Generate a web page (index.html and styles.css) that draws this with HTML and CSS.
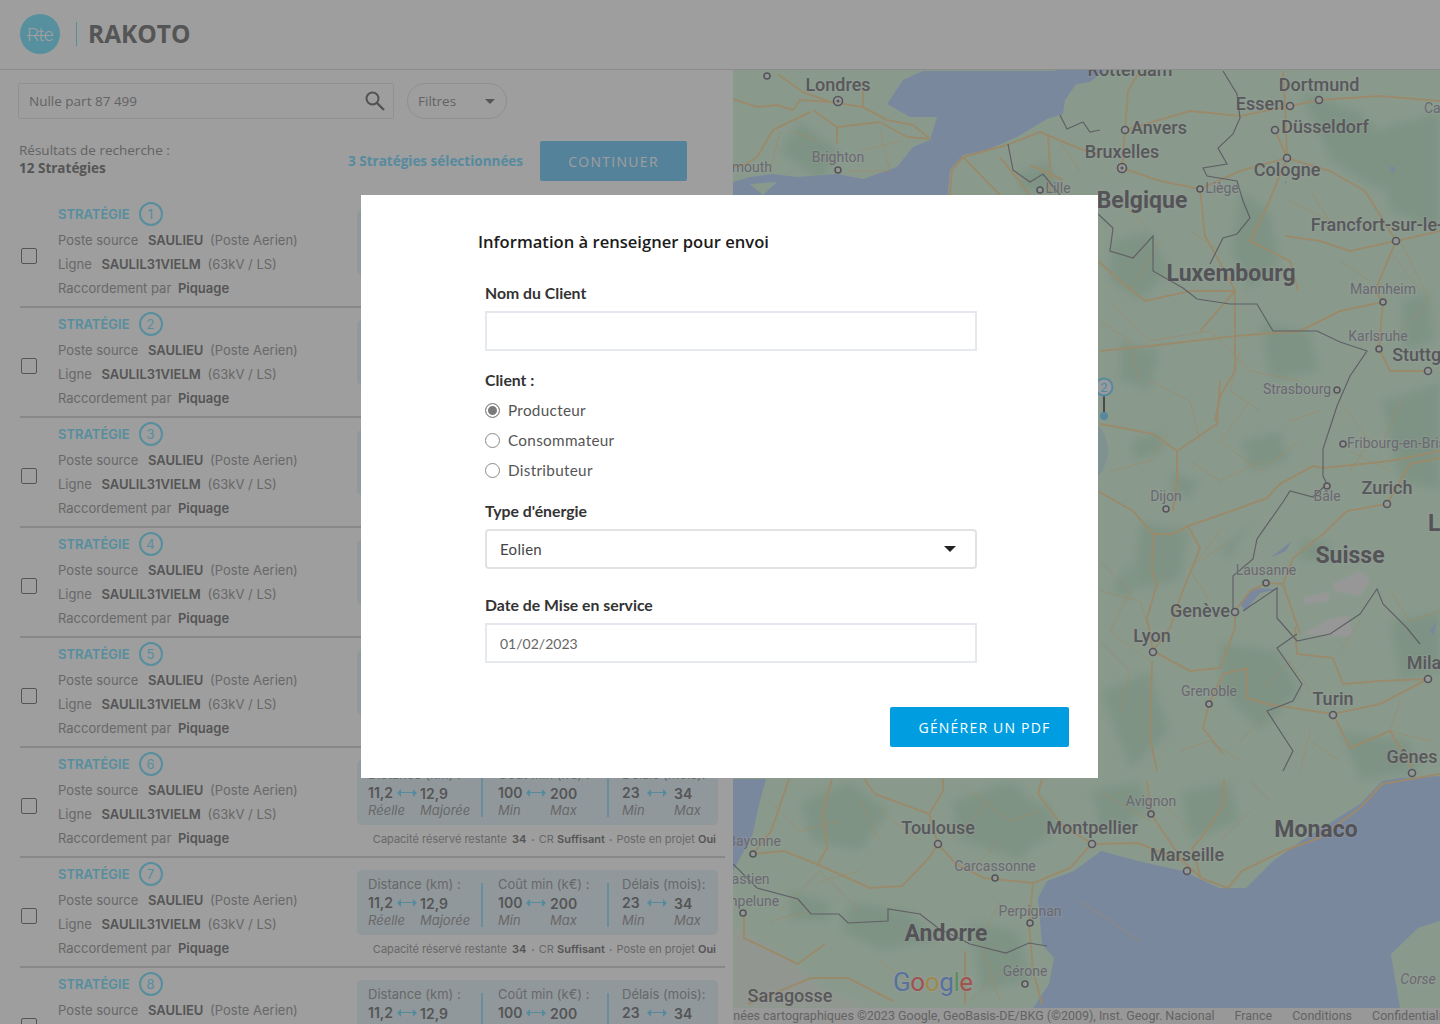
FILE: index.html
```html
<!DOCTYPE html>
<html lang="fr">
<head>
<meta charset="utf-8">
<title>Rakoto</title>
<link rel="stylesheet" href="styles.css">
</head>
<body>
<header class="topbar">
	<div class="logo"><span>Rte</span></div>
	<h1 class="appname">RAKOTO</h1>
</header>
<div class="layout">
	<section class="panel">
		<div class="searchbar">
			<div class="search">
				<input type="text" value="Nulle part 87 499">
				<svg width="22" height="22" viewBox="0 0 22 22"><circle cx="8.5" cy="8.5" r="6" fill="none" stroke="#858585" stroke-width="2"/><path d="M13 13l7 7" stroke="#858585" stroke-width="2.4"/></svg>
			</div>
			<button type="button" class="filter">Filtres<i class="caret"></i></button>
		</div>
		<div class="results">
			<p class="count">Résultats de recherche :<br><b>12 Stratégies</b></p>
			<span class="selected">3 Stratégies sélectionnées</span>
			<button type="button" class="continue">CONTINUER</button>
		</div>
		<div class="list">
			<article class="row">
				<i class="check"></i>
				<div class="info">
					<div class="title">STRATÉGIE <span class="num">1</span></div>
					<p>Poste source <b class="first">SAULIEU</b> (Poste Aerien)</p>
					<p>Ligne <b class="first">SAULIL31VIELM</b> (63kV / LS)</p>
					<p>Raccordement par <b class="first">Piquage</b></p>
				</div>
				<div class="side">
					<div class="card">
						<div class="metric m1"><span class="lbl">Distance (km) :</span><div class="vals"><span class="val"><b>11,2</b><i class="arrow"></i></span><b>12,9</b><em>Réelle</em><em>Majorée</em></div></div>
						<i class="sep"></i>
						<div class="metric m2"><span class="lbl">Coût min (k€) :</span><div class="vals"><span class="val"><b>100</b><i class="arrow"></i></span><b>200</b><em>Min</em><em>Max</em></div></div>
						<i class="sep"></i>
						<div class="metric m3"><span class="lbl">Délais (mois):</span><div class="vals"><span class="val"><b>23</b><i class="arrow"></i></span><b>34</b><em>Min</em><em>Max</em></div></div>
					</div>
					<p class="extra">Capacité réservé restante <b class="cap">34</b> <span class="dotsep">•</span> CR <b>Suffisant</b> <span class="dotsep">•</span> Poste en projet <b>Oui</b></p>
				</div>
			</article>
			<article class="row">
				<i class="check"></i>
				<div class="info">
					<div class="title">STRATÉGIE <span class="num">2</span></div>
					<p>Poste source <b class="first">SAULIEU</b> (Poste Aerien)</p>
					<p>Ligne <b class="first">SAULIL31VIELM</b> (63kV / LS)</p>
					<p>Raccordement par <b class="first">Piquage</b></p>
				</div>
				<div class="side">
					<div class="card">
						<div class="metric m1"><span class="lbl">Distance (km) :</span><div class="vals"><span class="val"><b>11,2</b><i class="arrow"></i></span><b>12,9</b><em>Réelle</em><em>Majorée</em></div></div>
						<i class="sep"></i>
						<div class="metric m2"><span class="lbl">Coût min (k€) :</span><div class="vals"><span class="val"><b>100</b><i class="arrow"></i></span><b>200</b><em>Min</em><em>Max</em></div></div>
						<i class="sep"></i>
						<div class="metric m3"><span class="lbl">Délais (mois):</span><div class="vals"><span class="val"><b>23</b><i class="arrow"></i></span><b>34</b><em>Min</em><em>Max</em></div></div>
					</div>
					<p class="extra">Capacité réservé restante <b class="cap">34</b> <span class="dotsep">•</span> CR <b>Suffisant</b> <span class="dotsep">•</span> Poste en projet <b>Oui</b></p>
				</div>
			</article>
			<article class="row">
				<i class="check"></i>
				<div class="info">
					<div class="title">STRATÉGIE <span class="num">3</span></div>
					<p>Poste source <b class="first">SAULIEU</b> (Poste Aerien)</p>
					<p>Ligne <b class="first">SAULIL31VIELM</b> (63kV / LS)</p>
					<p>Raccordement par <b class="first">Piquage</b></p>
				</div>
				<div class="side">
					<div class="card">
						<div class="metric m1"><span class="lbl">Distance (km) :</span><div class="vals"><span class="val"><b>11,2</b><i class="arrow"></i></span><b>12,9</b><em>Réelle</em><em>Majorée</em></div></div>
						<i class="sep"></i>
						<div class="metric m2"><span class="lbl">Coût min (k€) :</span><div class="vals"><span class="val"><b>100</b><i class="arrow"></i></span><b>200</b><em>Min</em><em>Max</em></div></div>
						<i class="sep"></i>
						<div class="metric m3"><span class="lbl">Délais (mois):</span><div class="vals"><span class="val"><b>23</b><i class="arrow"></i></span><b>34</b><em>Min</em><em>Max</em></div></div>
					</div>
					<p class="extra">Capacité réservé restante <b class="cap">34</b> <span class="dotsep">•</span> CR <b>Suffisant</b> <span class="dotsep">•</span> Poste en projet <b>Oui</b></p>
				</div>
			</article>
			<article class="row">
				<i class="check"></i>
				<div class="info">
					<div class="title">STRATÉGIE <span class="num">4</span></div>
					<p>Poste source <b class="first">SAULIEU</b> (Poste Aerien)</p>
					<p>Ligne <b class="first">SAULIL31VIELM</b> (63kV / LS)</p>
					<p>Raccordement par <b class="first">Piquage</b></p>
				</div>
				<div class="side">
					<div class="card">
						<div class="metric m1"><span class="lbl">Distance (km) :</span><div class="vals"><span class="val"><b>11,2</b><i class="arrow"></i></span><b>12,9</b><em>Réelle</em><em>Majorée</em></div></div>
						<i class="sep"></i>
						<div class="metric m2"><span class="lbl">Coût min (k€) :</span><div class="vals"><span class="val"><b>100</b><i class="arrow"></i></span><b>200</b><em>Min</em><em>Max</em></div></div>
						<i class="sep"></i>
						<div class="metric m3"><span class="lbl">Délais (mois):</span><div class="vals"><span class="val"><b>23</b><i class="arrow"></i></span><b>34</b><em>Min</em><em>Max</em></div></div>
					</div>
					<p class="extra">Capacité réservé restante <b class="cap">34</b> <span class="dotsep">•</span> CR <b>Suffisant</b> <span class="dotsep">•</span> Poste en projet <b>Oui</b></p>
				</div>
			</article>
			<article class="row">
				<i class="check"></i>
				<div class="info">
					<div class="title">STRATÉGIE <span class="num">5</span></div>
					<p>Poste source <b class="first">SAULIEU</b> (Poste Aerien)</p>
					<p>Ligne <b class="first">SAULIL31VIELM</b> (63kV / LS)</p>
					<p>Raccordement par <b class="first">Piquage</b></p>
				</div>
				<div class="side">
					<div class="card">
						<div class="metric m1"><span class="lbl">Distance (km) :</span><div class="vals"><span class="val"><b>11,2</b><i class="arrow"></i></span><b>12,9</b><em>Réelle</em><em>Majorée</em></div></div>
						<i class="sep"></i>
						<div class="metric m2"><span class="lbl">Coût min (k€) :</span><div class="vals"><span class="val"><b>100</b><i class="arrow"></i></span><b>200</b><em>Min</em><em>Max</em></div></div>
						<i class="sep"></i>
						<div class="metric m3"><span class="lbl">Délais (mois):</span><div class="vals"><span class="val"><b>23</b><i class="arrow"></i></span><b>34</b><em>Min</em><em>Max</em></div></div>
					</div>
					<p class="extra">Capacité réservé restante <b class="cap">34</b> <span class="dotsep">•</span> CR <b>Suffisant</b> <span class="dotsep">•</span> Poste en projet <b>Oui</b></p>
				</div>
			</article>
			<article class="row">
				<i class="check"></i>
				<div class="info">
					<div class="title">STRATÉGIE <span class="num">6</span></div>
					<p>Poste source <b class="first">SAULIEU</b> (Poste Aerien)</p>
					<p>Ligne <b class="first">SAULIL31VIELM</b> (63kV / LS)</p>
					<p>Raccordement par <b class="first">Piquage</b></p>
				</div>
				<div class="side">
					<div class="card">
						<div class="metric m1"><span class="lbl">Distance (km) :</span><div class="vals"><span class="val"><b>11,2</b><i class="arrow"></i></span><b>12,9</b><em>Réelle</em><em>Majorée</em></div></div>
						<i class="sep"></i>
						<div class="metric m2"><span class="lbl">Coût min (k€) :</span><div class="vals"><span class="val"><b>100</b><i class="arrow"></i></span><b>200</b><em>Min</em><em>Max</em></div></div>
						<i class="sep"></i>
						<div class="metric m3"><span class="lbl">Délais (mois):</span><div class="vals"><span class="val"><b>23</b><i class="arrow"></i></span><b>34</b><em>Min</em><em>Max</em></div></div>
					</div>
					<p class="extra">Capacité réservé restante <b class="cap">34</b> <span class="dotsep">•</span> CR <b>Suffisant</b> <span class="dotsep">•</span> Poste en projet <b>Oui</b></p>
				</div>
			</article>
			<article class="row">
				<i class="check"></i>
				<div class="info">
					<div class="title">STRATÉGIE <span class="num">7</span></div>
					<p>Poste source <b class="first">SAULIEU</b> (Poste Aerien)</p>
					<p>Ligne <b class="first">SAULIL31VIELM</b> (63kV / LS)</p>
					<p>Raccordement par <b class="first">Piquage</b></p>
				</div>
				<div class="side">
					<div class="card">
						<div class="metric m1"><span class="lbl">Distance (km) :</span><div class="vals"><span class="val"><b>11,2</b><i class="arrow"></i></span><b>12,9</b><em>Réelle</em><em>Majorée</em></div></div>
						<i class="sep"></i>
						<div class="metric m2"><span class="lbl">Coût min (k€) :</span><div class="vals"><span class="val"><b>100</b><i class="arrow"></i></span><b>200</b><em>Min</em><em>Max</em></div></div>
						<i class="sep"></i>
						<div class="metric m3"><span class="lbl">Délais (mois):</span><div class="vals"><span class="val"><b>23</b><i class="arrow"></i></span><b>34</b><em>Min</em><em>Max</em></div></div>
					</div>
					<p class="extra">Capacité réservé restante <b class="cap">34</b> <span class="dotsep">•</span> CR <b>Suffisant</b> <span class="dotsep">•</span> Poste en projet <b>Oui</b></p>
				</div>
			</article>
			<article class="row">
				<i class="check"></i>
				<div class="info">
					<div class="title">STRATÉGIE <span class="num">8</span></div>
					<p>Poste source <b class="first">SAULIEU</b> (Poste Aerien)</p>
					<p>Ligne <b class="first">SAULIL31VIELM</b> (63kV / LS)</p>
					<p>Raccordement par <b class="first">Piquage</b></p>
				</div>
				<div class="side">
					<div class="card">
						<div class="metric m1"><span class="lbl">Distance (km) :</span><div class="vals"><span class="val"><b>11,2</b><i class="arrow"></i></span><b>12,9</b><em>Réelle</em><em>Majorée</em></div></div>
						<i class="sep"></i>
						<div class="metric m2"><span class="lbl">Coût min (k€) :</span><div class="vals"><span class="val"><b>100</b><i class="arrow"></i></span><b>200</b><em>Min</em><em>Max</em></div></div>
						<i class="sep"></i>
						<div class="metric m3"><span class="lbl">Délais (mois):</span><div class="vals"><span class="val"><b>23</b><i class="arrow"></i></span><b>34</b><em>Min</em><em>Max</em></div></div>
					</div>
				</div>
			</article>
		</div>
	</section>
	<section class="map">
		<svg class="mapsvg" width="707" height="955" viewBox="733 69 707 955">
			<rect x="733" y="69" width="707" height="955" class="land"/>
			<!-- forets -->
			<g class="green">
				<path d="M1240 190l30 20 10 50-30 30-20-40zM1300 90l60 20 40 40-20 40-50-30zM1370 130l70-20v120l-50-20zM1110 240l40-10 20 40-30 30-30-20zM1120 340l40 10-10 40-30-10zM1260 320l50 10 10 40-50 10zM1380 400l60-20v110l-40-10zM1140 520l50 10-10 50-50 10zM1220 640l60 10 20 40-40 40-40-40zM1100 690l50-20 20 60-40 40zM1340 730l70 10 10 30-60 10zM1390 620l50-10v60l-40 10z"/>
				<path d="M800 800l50-20 40 30-30 40-50-10zM950 800l60-20 50 40-40 40-60-20zM1090 790l50-10 10 30-50 20zM1180 790l50-10 10 40-50 20zM850 900l60 10 30 30-60 10-40-20zM970 920l50 10 10 50-50 10zM800 120l40 30-20 30-40-30zM1020 170l30-10 10 30h-40z"/>
				<path d="M1130 440l30-10 5 20-30 10zM1240 440l40-10 10 30-40 10zM1300 540l30 0 0 20-30 0zM1170 470l30 10-10 20-20-10zM1400 300l30-10 5 50-30 10zM1130 560l-20 30 20 10zM1250 520l-30 30 10 10zM1110 790l-10 30 40 10zM1030 810l20-10 0 40-20 0zM790 890l40 10 0 20-40 0z"/>
			</g>
			<!-- zones claires -->
			<path class="pale" d="M733 925l55 33 40 35 50 14H733z"/>
			<path class="snow" d="M1333 583l27-13 10 10-10 15-25-5zM1303 597l27-7-2 10-23 3zM1303 633l27-15 18-3 5 20-18 0z"/>
			<!-- mer -->
			<path class="sea" d="M733 181l17-5 23-3 24 3 40-3 26 5 34-12 16-20 17-7 7-23-27 0-23-13 16-24 20-9h160l-6 12-12 17-2 14-16 5-30 18-30 13-24 5-13 15-2 26H733z"/>
			<path class="land" d="M750 183l27-2-14 13z"/>
			<path class="sea" d="M1033 1007l16-24 5-26-12-14-4-46 9-17 27-10 27-20 37 10 45 10 36 17h27l27-27 28-20 59-37 22-23 18-3 40-2v145l-22 7-27 26 9 54z"/>
			<path class="sea" d="M733 778h33l-6 22-8 35-19 35z"/>
			<path class="sea" d="M1240 603l13-16 27 1-20 4-15 18zM1270 557l22-17-6 10zM1105 69l-15 12-20 3-15-15zM1390 165l6 2-4 6zM1430 630l6-10-2 15zM1285 180l2 0-2 4z"/>
			<!-- routes -->
			<g class="road thin">
				<path d="M1110 300l40 40 60-10 40 40 50 10M1250 400l-30 40 40 30 40-30M1340 400l30 40-20 30M1100 560l30 30-20 40 40 30M1220 530l-30 40 20 30M1260 690l30-30 20 30M1340 760l-30-20M1400 240l30 60-40 40M1330 220l-20-30M1160 240l-30 50M780 130l-10 40M880 130l10 40 -40 0M1000 900l-20 40 20 60M1080 900l60 40M860 910l-40-40-40 40M1100 790l50 30M1250 810l-30 30M990 800l-40 40M860 800l20 40"/>
				<path d="M1100 320l30 20 10 40M1150 380l40 20 10 40M1240 350l-10 40 30 20M1290 420l30-10M1110 470l40-10 20-30M1190 460l30 20 40-20M1100 590l40 10 10 30M1200 560l30-20M1100 640l30 30-10 40M1180 750l30-10 30 20M1240 740l30-30M1310 730l-10 40M1390 590l20 30 30-10M1400 700l-10 30 40 10M1360 620l-20 30M1350 450l40 20M1400 400l-20 50M1420 290l-30-40M1340 260l30 20M1290 200l40 20M1190 230l30 20M1120 200l30 30"/>
				<path d="M770 800l30 30 40-10M880 810l40 30M970 790l40 30 30-10M1000 840l-30 30M820 880l40-10M770 920l40-10M880 960l40 30M1000 970l-30 30M1160 800l30 30M1250 780l20 20M790 130l30 10M860 150l40-10M1010 170l20 10M1060 140l20 30"/>
			</g>
			<g class="road">
				<path d="M1122 167l38 13 40 8 40-18 47-13M1122 167l3-38 3-39 12-20M1125 129l65-19 50 5 50-10 29-6 61-4 60 5M1275 129l12 28-2-57-2-30M1287 157l43 13 35 20 31 50M1287 157l-22 53-15 30 40 20 8 30M1396 240l-21 50 8 11-4 47 11 22h38M1396 240l44-10M1396 240l-46 10-30-10-35-5"/>
				<path d="M1200 188l5 47 25 45 5 10v80l-15 25-5 25M1235 290l-35 40M1100 350l50-5 85-10 65-5 40-20 43-9M1098 260l22 20 25 20 45-10 45 0"/>
				<path d="M1098 490l35 20 20 23h20l15-8 35-12 44-16 13-14 33-18 10 2 67-7 50-10M1100 423l23 4 30 6 24 17 40-27 3-43M1177 450v30l-4 30M1153 533l-1 37 5 13-10 34 6 33"/>
				<path d="M1188 525l12 22-20 50-10 30-17 23M1153 650l37 20 30-3 15-40v-17M1235 610l15-20 17-8 16 1 17 50M1283 583l10-26 30-24 24-23 40-7M1387 503l23-40 30-6M1428 678l-48 2-37 3-10-26-36-4-2-27M1333 713l47-10 48-25M1333 713l17 34 40-17 22 37M1209 703l14-30 24-6v30l20 6 66 10M1209 703l-6 24 20 26M1152 660l-2 77 7 33"/>
				<path d="M789 778l-18 52-18 23M753 853l31-3 37 15 49 22 32-2 27-28 9-14M938 843l-9-30 14-23v-12M832 778l-9 32 4 37-9 16M864 778l11 15 54 20M938 843l18 20 28 14 49 5 37-15 18-20 4-4M1092 843l-31-20-23-30 4-15"/>
				<path d="M1092 843l46-1 45 18 18 17 27 10 14-17 41-20 36-13 41-30 22-24 58-10M1033 882l-4 41 4 47 9 33M1151 813l-4-33M1151 813l32 47M1224 778v25l-23 34-9 10 9 30M744 913v24l54 26 27-20M748 1003l63-26h37l45 23M965 950v53"/>
				<path d="M733 98l24 8 20-2 16 5 7-10 30 2M757 156l16-27 37-18M813 109l24 17 43-5 27 15 23 2M837 126v17M830 101l33 5 24 13 26 5 17 14M777 73l26 18 27 10M863 89v17M757 156l-13 8-11 2"/>
				<path d="M950 194l2-25 11-13 44-12 33-13 43 18 17 4M963 156l37 38M1000 156l30 38M1048 133l2 36v25M1030 164l33 15"/>
			</g>
			<!-- frontieres -->
			<g class="border">
				<path d="M733 863l24 24 41 11 13 15h28l9 9 40-2v-12l32 5 18 14 32 16 36 9 23-10 18 3M1008 143l5 26 17 12 13-8 17 21M1060 114l7 14 16-7 7 10 10-2"/>
				<path d="M1223 70l14 23 3 24-7 16-15 14 9 16-24 4 4 8 30 5 6 20 7 17-13 16-14 4-13 26M1098 213l15 14-3 23 23 7 20-22v35l30 17 14 11 33 5h27l16 27h44l23 11 27 9-17 25-13 30-14 43v27l4 8-14 13-23-6-7 11-26 37-4 20-20 17v33M1243 610l34-23v30l20 23 33-7 30-20 17-25 6 15 24 24 13 16M1297 633l-20 14 25 36-9 17-26 10 26 40-10 20"/>
			</g>
			<!-- villes -->
			<g class="dots">
				<circle cx="767" cy="75" r="3"/><circle cx="838" cy="169" r="3"/><circle cx="1319" cy="99" r="3.5"/><circle cx="1290" cy="105" r="3.5"/>
				<circle cx="1125" cy="129" r="3.5"/><circle cx="1275" cy="129" r="3.5"/><circle cx="1287" cy="157" r="3.5"/><circle cx="1040" cy="189" r="3"/>
				<circle cx="1200" cy="188" r="3"/><circle cx="1396" cy="240" r="3.5"/><circle cx="1383" cy="301" r="3"/><circle cx="1379" cy="348" r="3"/>
				<circle cx="1428" cy="370" r="3.5"/><circle cx="1337" cy="389" r="3"/><circle cx="1343" cy="443" r="3"/><circle cx="1327" cy="485" r="3"/>
				<circle cx="1387" cy="503" r="3.5"/><circle cx="1166" cy="508" r="3"/><circle cx="1266" cy="582" r="3"/><circle cx="1235" cy="611" r="3.5"/>
				<circle cx="1153" cy="651" r="3.5"/><circle cx="1428" cy="678" r="3.5"/><circle cx="1209" cy="703" r="3"/><circle cx="1333" cy="714" r="3.5"/>
				<circle cx="1412" cy="772" r="3.5"/><circle cx="1151" cy="813" r="3"/><circle cx="938" cy="843" r="3.5"/><circle cx="1092" cy="843" r="3.5"/>
				<circle cx="1187" cy="870" r="3.5"/><circle cx="753" cy="853" r="3"/><circle cx="995" cy="877" r="3"/><circle cx="743" cy="912" r="3"/>
				<circle cx="1030" cy="922" r="3"/><circle cx="1025" cy="983" r="3"/>
				<circle cx="838" cy="100" r="4.5"/><circle cx="1122" cy="167" r="4.5"/>
			</g>
			<circle cx="838" cy="100" r="1.5" class="capital"/><circle cx="1122" cy="167" r="1.5" class="capital"/>
			<!-- noms -->
			<g class="lmed" transform="translate(0 -1)">
				<text x="838" y="91">Londres</text><text x="1130" y="76">Rotterdam</text><text x="1319" y="91">Dortmund</text><text x="1260" y="110">Essen</text>
				<text x="1159" y="134">Anvers</text><text x="1325" y="133">Düsseldorf</text><text x="1122" y="158">Bruxelles</text><text x="1287" y="176">Cologne</text>
				<text x="1397" y="231">Francfort-sur-le-Main</text><text x="1428" y="361">Stuttgart</text><text x="1387" y="494">Zurich</text><text x="1200" y="617">Genève</text>
				<text x="1152" y="642">Lyon</text><text x="1429" y="669">Milan</text><text x="1333" y="705">Turin</text><text x="1412" y="763">Gênes</text>
				<text x="938" y="834">Toulouse</text><text x="1092" y="834">Montpellier</text><text x="1187" y="861">Marseille</text><text x="790" y="1002">Saragosse</text>
			</g>
			<g class="lsmall" transform="translate(0 -1)">
				<text x="838" y="162">Brighton</text><text x="1058" y="193">Lille</text><text x="1222" y="193">Liège</text><text x="1383" y="294">Mannheim</text>
				<text x="1378" y="341">Karlsruhe</text><text x="1297" y="394">Strasbourg</text><text x="1408" y="448">Fribourg-en-Brisgau</text><text x="1327" y="501">Bâle</text>
				<text x="1166" y="501">Dijon</text><text x="1266" y="575">Lausanne</text><text x="1209" y="696">Grenoble</text><text x="1151" y="806">Avignon</text>
				<text x="995" y="871">Carcassonne</text><text x="1030" y="916">Perpignan</text><text x="1025" y="976">Gérone</text><text x="754" y="846">Bayonne</text>
				<text x="721" y="884">Saint-Sébastien</text><text x="744" y="906">Pampelune</text><text x="735" y="172">Portsmouth</text><text x="1445" y="113">Cassel</text>
			</g>
			<g class="lbig">
				<text x="1142" y="207">Belgique</text><text x="1231" y="280">Luxembourg</text><text x="1350" y="562">Suisse</text><text x="1316" y="836">Monaco</text>
				<text x="946" y="940">Andorre</text><text x="1498" y="530">Liechtenstein</text>
			</g>
			<text x="1418" y="983" class="lcorse">Corse</text>
			<text x="893" y="990" class="glogo"><tspan fill="#8fb8ff">G</tspan><tspan fill="#ff8a80">o</tspan><tspan fill="#ffdc78">o</tspan><tspan fill="#8fb8ff">g</tspan><tspan fill="#96e696">l</tspan><tspan fill="#ff8a80">e</tspan></text>
			<!-- repere -->
			<circle cx="1070" cy="450" r="38" class="reach"/>
			<path d="M1104 394v22" stroke="#777" stroke-width="2"/>
			<circle cx="1104" cy="415" r="4" fill="#8bdcff"/>
			<circle cx="1104" cy="386" r="8.5" fill="#f4fbff" stroke="#8bdcff" stroke-width="2"/>
			<text x="1104" y="391" class="lpin">2</text>
		</svg>
		<div class="credits">
			<span>Données cartographiques ©2023 Google, GeoBasis-DE/BKG (©2009), Inst. Geogr. Nacional</span>
			<span>France</span><span>Conditions</span><span class="lastcredit">Confidentialité</span>
		</div>
	</section>
</div>
<div class="overlay">
	<form class="modal">
		<h2>Information à renseigner pour envoi</h2>
		<div class="fields">
			<label class="flabel first-label">Nom du Client</label>
			<input type="text" class="field">
			<label class="flabel client-label">Client :</label>
			<div class="radios">
				<label class="radio"><input type="radio" name="client" checked>Producteur</label>
				<label class="radio"><input type="radio" name="client">Consommateur</label>
				<label class="radio"><input type="radio" name="client">Distributeur</label>
			</div>
			<label class="flabel energy-label">Type d'énergie</label>
			<div class="field select">Eolien<i></i></div>
			<label class="flabel date-label">Date de Mise en service</label>
			<input type="text" class="field date" value="01/02/2023">
		</div>
		<div class="actions"><button type="button" class="pdf">GÉNÉRER UN PDF</button></div>
	</form>
</div>
</body>
</html>
```
FILE: styles.css
```css
html,body{margin:0; height:100%; overflow:hidden; background:#fff;}
body{font-family:"Inter","Liberation Sans",sans-serif; color:#a8a8a8;}
p,h1,h2{margin:0;}
button,input{font:inherit;}

.topbar{display:flex; align-items:center; height:68px; padding-bottom:1px; border-bottom:1px solid #e0e0e0; padding-left:20px;}
.logo{display:flex; align-items:center; justify-content:center; width:40px; height:40px; border-radius:50%; background:#8ce8ff; color:#fff;}
.logo span{font:300 19px "Roboto",sans-serif; letter-spacing:-.6px; text-decoration:line-through; text-decoration-thickness:1px;}
.appname{margin-left:16px; padding-left:11px; border-left:1px solid #8be6ff; height:24px; font:700 24.5px/24px "Open Sans",sans-serif; color:#8a8a8a;}

.layout{display:flex; height:955px;}
.panel{width:733px; flex:none; overflow:hidden;}

.searchbar{display:flex; gap:13px; padding:13px 0 0 18px;}
.search{display:flex; align-items:center; width:367px; height:34px; border:1px solid #ebebeb; border-radius:2px; padding-right:7px;}
.search input{flex:1; border:0; outline:0; padding:0 0 0 10px; background:none; font:400 13.5px "Open Sans",sans-serif; color:#a0a0a0;}
.filter{display:flex; align-items:center; justify-content:space-between; width:100px; height:36px; padding:0 11px 0 10px; border:1px solid #e6e6e6; border-radius:18px; background:none; font:400 13.5px "Open Sans",sans-serif; color:#a0a0a0;}
.caret{width:0; height:0; border:5px solid transparent; border-top:5px solid #8a8a8a; border-bottom:0;}

.results{display:flex; align-items:center; padding:22px 0 0 19px;}
.count{width:329px; margin-top:-4px; font:400 13.5px/18px "Open Sans",sans-serif; color:#a0a0a0;}
.count b{color:#8a8a8a;}
.selected{width:192px; font:700 13.5px "Open Sans",sans-serif; color:#8be0ff;}
.continue{width:147px; height:40px; border:0; border-radius:2px; background:#87d2f8; color:#fff; font:400 14px "Open Sans",sans-serif; letter-spacing:1.3px;}

.list{margin:17px 0 0 20px; width:705px;}
.row{display:flex; box-sizing:border-box; height:110px; border-bottom:2px solid #dcdcdc;}
.check{flex:none; width:14px; height:14px; margin:50px 21px 0 1px; border:1px solid #8a8a8a; border-radius:2px;}
.info{width:299px; flex:none; padding-top:4px; font-size:13px; line-height:24px;}
.info b{font-weight:600; color:#8a8a8a;}
.first{margin:0 3px 0 6px;}
.info p:last-child .first{margin-left:3px;}
.title{display:flex; align-items:center; gap:9px; height:24px; margin-bottom:2px; font-weight:600; color:#8be6ff; font-size:13px;}
.num{display:flex; align-items:center; justify-content:center; box-sizing:border-box; width:24px; height:24px; border:2px solid #8be6ff; border-radius:50%; font-weight:400; font-size:13px;}

.side{flex:none; width:361px;}
.card{display:flex; box-sizing:border-box; height:65px; margin-top:12px; padding:5px 0 0 11px; border-radius:5px; background:#eaf6fc; font-size:14px;}
.metric{flex:none;}
.m1{width:113px;}
.m2{width:109px; margin-left:15px;}
.m3{margin-left:13px;}
.sep{flex:none; width:2px; height:44px; margin-top:8px; background:#a8e4fb;}
.lbl{display:block; line-height:18px; white-space:nowrap; font-size:13px;}
.vals{display:grid; grid-template-columns:52px auto; grid-auto-rows:17px; margin-top:1px;}
.vals b{font-weight:600; color:#8a8a8a; line-height:19px;}
.vals em{font-size:13px; line-height:18px;}
.val{display:flex; align-items:center;}
.arrow{position:relative; width:18px; height:1.5px; margin:0 auto; background:#8be0ff;}
.arrow::before,.arrow::after{content:""; position:absolute; top:-3px; border:4px solid transparent;}
.arrow::before{left:-1px; border-right-color:#8be0ff; border-left:0;}
.arrow::after{right:-1px; border-left-color:#8be0ff; border-right:0;}
.extra{margin-top:7px; padding-right:2px; text-align:right; white-space:nowrap; font-size:11px; line-height:14px;}
.extra b{font-weight:600; color:#8a8a8a;}
.cap{margin:0 1px 0 2px;}
.dotsep{font-size:6px; vertical-align:1px; margin:0 1px;}

.map{position:relative; flex:1; overflow:hidden;}
.mapsvg{display:block;}
.land{fill:#def9e4;}
.green{fill:#cdeed6; filter:blur(4px);}
.pale{fill:#ecf3e8; filter:blur(3px);}
.snow{fill:#f4f4f4; filter:blur(1px);}
.sea{fill:#c5dbff;}
.road{fill:none; stroke:#f8dfae; stroke-width:2; stroke-linejoin:round;}
.road.thin{stroke-width:1; opacity:.75;}
.border{fill:none; stroke:#9a9aa4; stroke-width:1.2;}
.dots{fill:#f0f4f2; stroke:#8a8a90; stroke-width:1.6;}
.capital{fill:#8a8a90;}
.mapsvg text{font-family:"Roboto",sans-serif; text-anchor:middle; paint-order:stroke; stroke:rgba(255,255,255,.3); stroke-width:2px;}
.lmed text{font-size:18px; font-weight:500; fill:#8e8e94;}
.lsmall text{font-size:14px; fill:#aaaab6;}
.lbig text{font-size:23px; font-weight:700; fill:#88888e;}
.lcorse{font-size:14px; font-style:italic; fill:#aaaab6;}
.glogo{font-size:26px; text-anchor:start !important; stroke:rgba(255,255,255,.4) !important; letter-spacing:-.4px;}
.lpin{font-size:13px; fill:#8bdcff; stroke:none !important;}
.reach{fill:#90b4ff; opacity:.2;}
.credits{position:absolute; left:0; right:0; bottom:1px; height:16px; display:flex; justify-content:flex-end; gap:20px; overflow:hidden; background:#f6f6f6; font:400 12.5px/16px "Roboto",sans-serif; color:#a0a0a0; white-space:nowrap;}
.credits span{flex:none;}
.credits .lastcredit{width:68px; overflow:hidden;}

.overlay{position:fixed; inset:0; background:rgba(0,0,0,.38);}
.modal{position:absolute; left:361px; top:195px; box-sizing:border-box; width:737px; height:583px; background:#fff; color:#333;}
.modal h2{padding:36px 0 0 117px; font:600 16.6px/22px "Open Sans",sans-serif; color:#1c1c1c;}
.fields{display:flex; flex-direction:column; width:492px; margin-left:124px;}
.flabel{font:700 15.8px/20px "Lato",sans-serif; color:#333;}
.first-label{margin-top:30px;}
.client-label{margin-top:19px;}
.energy-label{margin-top:16px;}
.date-label{margin-top:26px;}
.field{box-sizing:border-box; width:492px; height:40px; margin-top:8px; padding:0 13px; border:2px solid #e6e8f0; background:#fff; font:400 15px "Lato",sans-serif; letter-spacing:.3px; color:#444; outline:0;}
.date{font-size:14px; letter-spacing:0; color:#666;}
.select{display:flex; align-items:center; justify-content:space-between; border-radius:4px; border-color:#e2e2e2;}
.select i{width:0; height:0; margin-right:6px; border:6px solid transparent; border-top:6px solid #222; border-bottom:0;}
.radios{display:flex; flex-direction:column; margin-top:5px;}
.radio{display:flex; align-items:center; gap:8px; height:30px; font:400 15.3px "Lato",sans-serif; letter-spacing:.3px; color:#555;}
.radio input{appearance:none; box-sizing:border-box; flex:none; width:15px; height:15px; margin:0; border:1.5px solid #8a8a8a; border-radius:50%; background:#fff;}
.radio input:checked{background:#7a7a7a; box-shadow:inset 0 0 0 2px #fff;}
.actions{display:flex; justify-content:flex-end; padding:44px 29px 0 0;}
.pdf{width:179px; height:40px; padding:0 0 0 10px; border:0; border-radius:2px; background:#009ee0; color:#fff; font:400 14px "Open Sans",sans-serif; letter-spacing:1.2px;}
```
